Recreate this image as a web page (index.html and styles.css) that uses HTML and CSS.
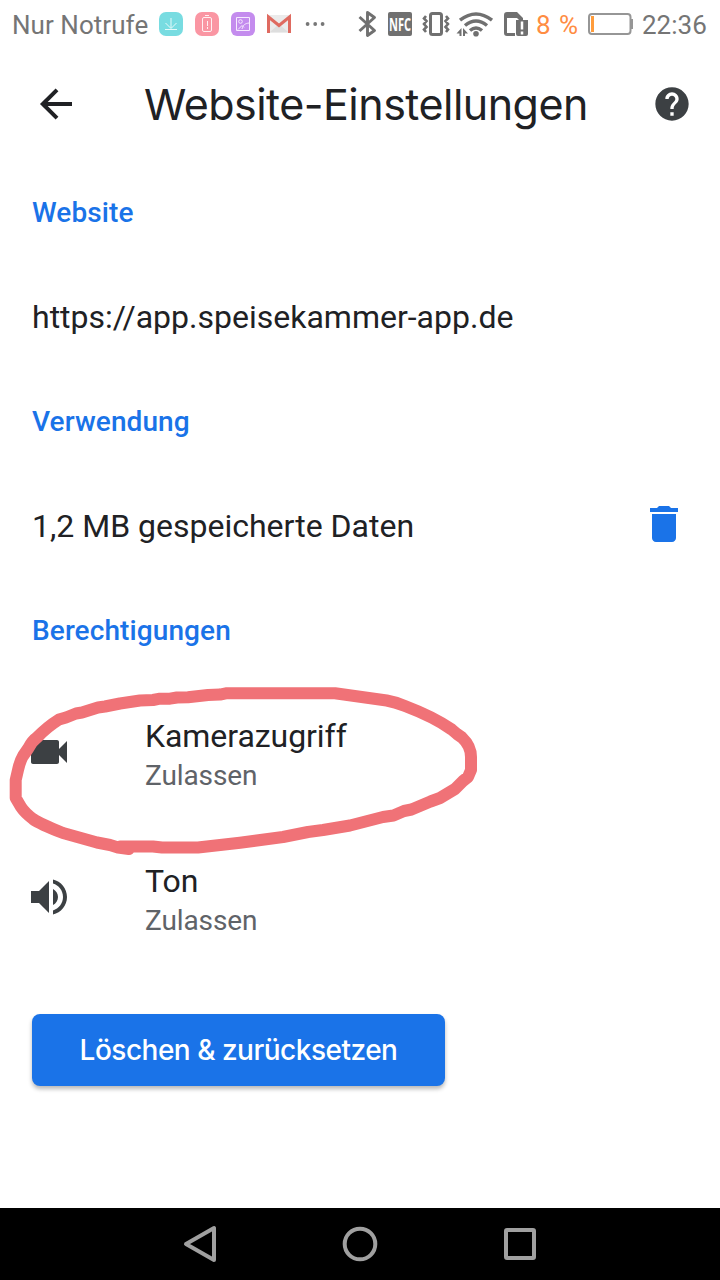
FILE: index.html
```html
<!DOCTYPE html>
<html lang="de">
<head>
<meta charset="utf-8">
<title>Website-Einstellungen</title>
<link rel="stylesheet" href="styles.css">
</head>
<body>
<div class="screen">
  <header class="status">
    <span class="carrier">Nur Notrufe</span>
    <svg class="notifications" width="168" height="48" viewBox="159 0 168 48">
      <rect x="159" y="12" width="24" height="24" rx="7" fill="#78dce1"/>
      <path d="M171 18v10M165.500 23l5.500 5.500 5.500-5.500M165 29.500h12" fill="none" stroke="#e6fafa" stroke-width="1"/>
      <rect x="195" y="12" width="24" height="24" rx="7" fill="#fa96a3"/>
      <rect x="202.500" y="17.500" width="9" height="14" rx="1.500" fill="none" stroke="#fff0f2"/>
      <path d="M205 15.500h4M207.500 21v5M207.500 27v2" stroke="#fff0f2" fill="none"/>
      <rect x="231" y="12" width="24" height="24" rx="6" fill="#c48cee"/>
      <path d="M236.500 17.500h13v13h-13zM238 29.500l4-4 2 2M242 29c1-4 3-5.500 7-6" fill="none" stroke="#f6ebff"/>
      <circle cx="240.500" cy="21.500" r="1.800" fill="none" stroke="#f6ebff"/>
      <path d="M267 15h24v18h-24z" fill="#ebebeb"/>
      <path d="M270 32l9-8 9 8z" fill="#dedede"/>
      <path d="M268.500 33V17l10.500 8.500L289.500 17v16" fill="none" stroke="#df6a60" stroke-width="3"/>
      <g fill="#777"><circle cx="307.600" cy="24" r="1.900"/><circle cx="315.200" cy="24" r="1.900"/><circle cx="322.600" cy="24" r="1.900"/></g>
    </svg>
    <svg class="system" width="172" height="48" viewBox="357 0 172 48">
      <path d="M359.500 17l15 13.500-7 5v-23l7 5-15 13.500" fill="none" stroke="#707070" stroke-width="2.900" stroke-linejoin="round"/>
      <rect x="388" y="12" width="24" height="24" rx="2" fill="#707070"/>
      <text class="nfc" x="389" y="31" textLength="22" lengthAdjust="spacingAndGlyphs">NFC</text>
      <rect x="430.500" y="13.500" width="11" height="21" rx="2" fill="none" stroke="#707070" stroke-width="3"/>
      <path d="M426 16l-2 2.500 2.500 2.500-2.500 3 2.500 3-2.500 2.500 2 2.500M446 16l2 2.500-2.500 2.500 2.500 3-2.500 3 2.500 2.500-2 2.500" fill="none" stroke="#707070" stroke-width="2.600"/>
      <g fill="none" stroke="#707070" stroke-width="3.500">
        <path d="M460 20.200q16-12.500 32 0M465 25.500q11-9 22 0M470 30.500q6-5 12 0"/>
      </g>
      <circle cx="476" cy="33.700" r="2.800" fill="#707070"/>
      <path d="M461.500 28v8h-2v-2.500H456.500zM463 28l5 5.500h-3V36h-2z" fill="#707070"/>
      <path d="M504 15q0-3 3-3h10l6 6v2h-4l-2-2h-10v15h8v3h-8q-3 0-3-3z" fill="#707070"/>
      <path d="M516 20h12v14q0 2-2 2h-8q-2 0-2-2z" fill="#707070"/>
      <path d="M522 21.500v8M522 31.500v3" stroke="#fff" stroke-width="2.500"/>
    </svg>
    <span class="percent">8 %</span>
    <svg class="battery" width="45" height="48" viewBox="588 0 45 48">
      <rect x="589" y="14" width="41.500" height="20" rx="3" fill="none" stroke="#969696" stroke-width="2"/>
      <path d="M631 19h2v10h-2z" fill="#969696"/>
      <path d="M591 16h3v16h-3z" fill="#ff9c3c"/>
    </svg>
    <span class="clock">22:36</span>
  </header>

  <nav class="toolbar">
    <svg width="48" height="48" viewBox="0 0 24 24"><path d="M20 12H5M12.500 4.900L5.400 12l7.100 7.100" fill="none" stroke="#202124" stroke-width="2"/></svg>
    <h1 class="title">Website-Einstellungen</h1>
    <svg class="help" width="40" height="40" viewBox="0 0 24 24"><path fill="#3c4043" d="M12 2C6.480 2 2 6.480 2 12s4.480 10 10 10 10-4.480 10-10S17.520 2 12 2zm1 17h-2v-2h2v2zm2.070-7.750l-.9.920C13.450 12.900 13 13.500 13 15h-2v-.500c0-1.100.450-2.100 1.170-2.830l1.240-1.260c.370-.360.590-.860.590-1.410 0-1.100-.9-2-2-2s-2 .9-2 2H8c0-2.210 1.790-4 4-4s4 1.790 4 4c0 .880-.360 1.680-.930 2.250z"/></svg>
  </nav>

  <main class="content">
    <h2 class="heading">Website</h2>
    <div class="row"><span class="url">https://app.speisekammer-app.de</span></div>
    <h2 class="heading">Verwendung</h2>
    <div class="row">
      <span class="usage">1,2 MB gespeicherte Daten</span>
      <svg class="trash" width="48" height="48" viewBox="0 0 24 24"><path fill="#1a73e8" d="M6 19c0 1.100.9 2 2 2h8c1.100 0 2-.9 2-2V7H6v12zM19 4h-3.500l-1-1h-5l-1 1H5v2h14V4z"/></svg>
    </div>
    <h2 class="heading">Berechtigungen</h2>
    <div class="permission">
      <svg width="48" height="48" viewBox="0 0 24 24"><path fill="#3c4043" d="M17 10.500V7c0-.550-.450-1-1-1H4c-.550 0-1 .450-1 1v10c0 .550.450 1 1 1h12c.550 0 1-.450 1-1v-3.500l4 4v-11l-4 4z"/></svg>
      <div class="labels"><span class="name">Kamerazugriff</span><span class="state">Zulassen</span></div>
    </div>
    <div class="permission">
      <svg width="48" height="48" viewBox="0 0 24 24"><path fill="#3c4043" d="M3 9v6h4l5 5V4L7 9H3zm13.500 3c0-1.770-1.020-3.290-2.500-4.030v8.050c1.480-.730 2.500-2.250 2.500-4.020zM14 3.230v2.060c2.890.860 5 3.540 5 6.710s-2.110 5.850-5 6.710v2.060c4.010-.910 7-4.490 7-8.770s-2.990-7.860-7-8.770z"/></svg>
      <div class="labels"><span class="name">Ton</span><span class="state">Zulassen</span></div>
    </div>
    <button class="reset">Löschen &amp; zurücksetzen</button>
  </main>

  <footer class="navbar">
    <svg width="36" height="40" viewBox="0 0 36 40"><path d="M4 20L32 4v32z" fill="none" stroke="#a0a0a0" stroke-width="4" stroke-linejoin="round"/></svg>
    <svg width="36" height="40" viewBox="0 0 36 40"><circle cx="18" cy="20" r="15.300" fill="none" stroke="#a0a0a0" stroke-width="4"/></svg>
    <svg width="36" height="40" viewBox="0 0 36 40"><rect x="4" y="6" width="28" height="28" rx="1" fill="none" stroke="#a0a0a0" stroke-width="4"/></svg>
  </footer>

  <svg class="marker" width="480" height="180" viewBox="0 680 480 180">
    <path d="M129 849L118 847.500 110 845 97 842.500 63 833 Q40 824 33 819 Q25 813 21 807L15.700 798V780L18 770 Q20 761 23 756L28.500 748 Q32 741 37 737.500 Q47 727 59 719.500L66 717.500 76 713.500 82 712.500 98 707.500 105 706.500 120 703.500 140 700.500 153 700 160 698.700H170L177 697.500 188 697.300 208 695 220 694.600 227 693.200H335L386.700 700.500 Q395 702 405 706 Q434 717 451.700 729.500L457 734 462 737.500 Q471 746 471 757V770L468 777 463 781 455 789 440 798 430.500 801.500 411.500 809.500 404 811 393.500 815.500 383 817 350 825.500 323 830 308 832 283 837 240 842.700 198 847.500H162L153 846.500H120"/>
  </svg>
</div>
</body>
</html>
```
FILE: styles.css
```css
* { box-sizing: border-box; }
body { margin: 0; background: #fff; font-family: Roboto, "Liberation Sans", sans-serif; }
svg { display: block; flex: none; }
.screen { position: relative; width: 720px; height: 1280px; display: flex; flex-direction: column; overflow: hidden; background: #fff; }
.status { height: 48px; display: flex; align-items: center; padding-left: 12px; font-size: 26px; line-height: 30px; color: #757575; white-space: nowrap; }
.status span { padding-top: 2px; }
.carrier { width: 147px; letter-spacing: 0.05px; }
.system { margin-left: 30px; }
.percent { width: 52px; margin-left: 7px; color: #ff8c42; letter-spacing: 1px; }
.clock { margin-left: 9px; }
.nfc { font: 700 18px "Open Sans", sans-serif; fill: #fff; }
.toolbar { height: 112px; display: flex; align-items: center; padding: 0 28px 0 32px; }
.title { flex: 1; margin: 0 0 0 64px; font: 400 43px/56px Inter, sans-serif; letter-spacing: -0.52px; color: #202124; white-space: nowrap; }
.content { flex: 1; padding: 0 32px; }
.heading { height: 104.500px; margin: 0; padding-top: 2px; display: flex; align-items: center; color: #1a73e8; font-size: 28px; font-weight: 500; line-height: 36px; letter-spacing: 0.1px; }
.row { height: 104.500px; display: flex; align-items: center; justify-content: space-between; color: #202124; font-size: 32px; line-height: 40px; }
.trash { margin-top: -3px; }
.permission { height: 145px; display: flex; align-items: center; margin-left: -7px; }
.permission > svg { margin-bottom: 7px; }
.labels { display: flex; flex-direction: column; margin-left: 72px; }
.name { color: #202124; font-size: 32px; line-height: 40px; padding-bottom: 1px; letter-spacing: -0.06px; }
.state { color: #5f6368; font-size: 28px; line-height: 38px; letter-spacing: -0.1px; }
.reset { display: flex; align-items: center; justify-content: center; width: 413px; height: 72px; margin: 41px 0 0; padding: 0; border: 0; border-radius: 8px; background: #1a73e8; color: #fff; font: 500 28px/36px Inter, sans-serif; letter-spacing: -0.5px; white-space: nowrap; box-shadow: 0 3px 4px rgba(0, 0, 0, .28); }
.navbar { height: 72px; display: flex; align-items: center; justify-content: center; gap: 124px; background: #000; }
.marker { position: absolute; left: 0; top: 680px; }
.marker path { fill: none; stroke: #f07277; stroke-width: 12px; stroke-linecap: round; stroke-linejoin: round; }
```
